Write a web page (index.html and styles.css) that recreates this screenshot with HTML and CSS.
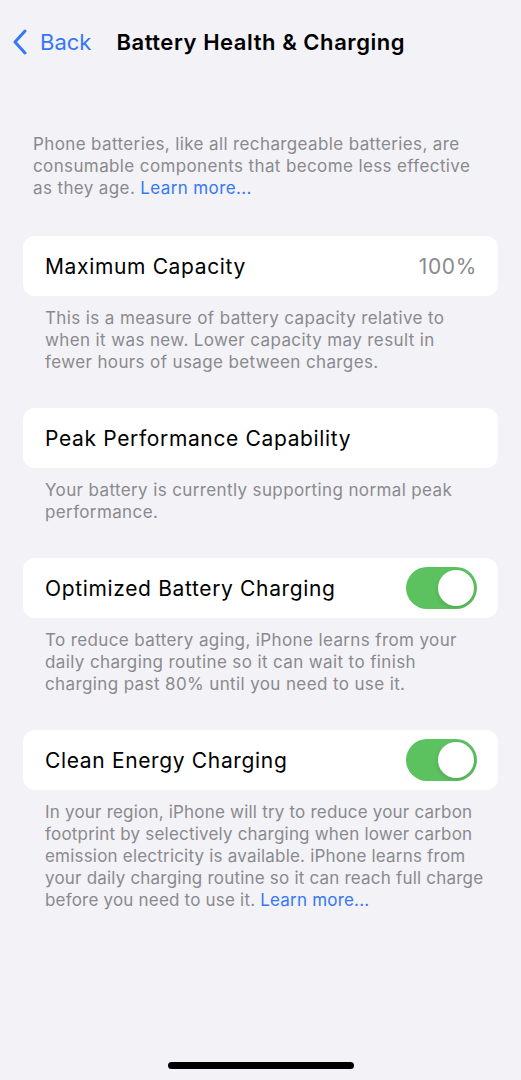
FILE: index.html
```html
<!DOCTYPE html>
<html lang="en">
<head>
    <meta charset="utf-8" name="viewport" content="width=521"/>
    <title>Battery Health &amp; Charging</title>
    <link rel="stylesheet" href="styles.css">
</head>
<body>
<div id="screen">
    <div class="nav">
        <a class="back">
            <svg class="chevron" width="16" height="26" viewBox="0 0 16 26">
                <path d="M13 2 L3 13 L13 24" fill="none" stroke="#3478f6" stroke-width="3" stroke-linecap="round" stroke-linejoin="round"/>
            </svg>
            <span>Back</span>
        </a>
        <h1 class="title">Battery Health &amp; Charging</h1>
    </div>

    <p class="intro">Phone batteries, like all rechargeable batteries, are consumable components that become less effective as they age. <a class="link">Learn more...</a></p>

    <div class="group">
        <div class="card">
            <span class="label">Maximum Capacity</span>
            <span class="value">100%</span>
        </div>
        <p class="note">This is a measure of battery capacity relative to when it was new. Lower capacity may result in fewer hours of usage between charges.</p>
    </div>

    <div class="group">
        <div class="card">
            <span class="label">Peak Performance Capability</span>
        </div>
        <p class="note">Your battery is currently supporting normal peak performance.</p>
    </div>

    <div class="group">
        <div class="card">
            <span class="label">Optimized Battery Charging</span>
            <span class="switch on"><span class="knob"></span></span>
        </div>
        <p class="note">To reduce battery aging, iPhone learns from your daily charging routine so it can wait to finish charging past 80% until you need to use it.</p>
    </div>

    <div class="group">
        <div class="card">
            <span class="label">Clean Energy Charging</span>
            <span class="switch on"><span class="knob"></span></span>
        </div>
        <p class="note tight">In your region, iPhone will try to reduce your carbon footprint by selectively charging when lower carbon emission electricity is available. iPhone learns from your daily charging routine so it can reach full charge before you need to use it. <a class="link">Learn more...</a></p>
    </div>

    <div class="home-bar"></div>
</div>
</body>
</html>
```

FILE: styles.css
```css
*{
    padding: 0;
    margin: 0;
    box-sizing: border-box;
}

body{
    background-color: #f2f2f7;
    font-family: Inter, "Liberation Sans", sans-serif;
    color: #000;
}

#screen{
    width: 521px;
    height: 1080px;
    display: flex;
    flex-direction: column;
}

/* top bar */
.nav{
    height: 44px;
    margin-top: 20px;
    display: flex;
    align-items: center;
    padding-left: 12px;
}

.back{
    display: flex;
    align-items: center;
    color: #3478f6;
    font-size: 22px;
    gap: 12px;
}

.title{
    margin-left: 25px;
    font-size: 22px;
    font-weight: 600;
    letter-spacing: 0.55px;
}

.intro{
    margin-top: 69px;
    padding: 0 40px 0 33px;
    font-size: 17px;
    line-height: 22px;
    letter-spacing: 0.38px;
    color: #8a8a8e;
}

.link{
    color: #3478f6;
}

.group{
    margin-top: 37px;
    padding: 0 23px;
}

.group + .group{
    margin-top: 35px;
}

.card{
    height: 60px;
    background-color: #fff;
    border-radius: 12px;
    display: flex;
    align-items: center;
    justify-content: space-between;
    padding: 0 21px 0 22px;
}

.label{
    font-size: 21px;
    letter-spacing: 0.65px;
}

.value{
    font-size: 21px;
    letter-spacing: 0.65px;
    color: #8a8a8e;
}

.note{
    padding: 11px 14px 0 22px;
    font-size: 17px;
    line-height: 22px;
    letter-spacing: 0.38px;
    color: #8a8a8e;
}

.note.tight{
    letter-spacing: 0.2px;
}

/* toggle */
.switch{
    width: 71px;
    height: 42px;
    border-radius: 21px;
    background-color: #e9e9ea;
    display: flex;
    align-items: center;
    padding: 3px;
}

.switch.on{
    background-color: #5cc15f;
    justify-content: flex-end;
}

.knob{
    width: 36px;
    height: 36px;
    border-radius: 50%;
    background-color: #fff;
    box-shadow: 0 2px 4px rgba(0,0,0,0.12);
}

.home-bar{
    margin: auto auto 11px auto;
    width: 186px;
    height: 7px;
    border-radius: 4px;
    background-color: #000;
}
```
